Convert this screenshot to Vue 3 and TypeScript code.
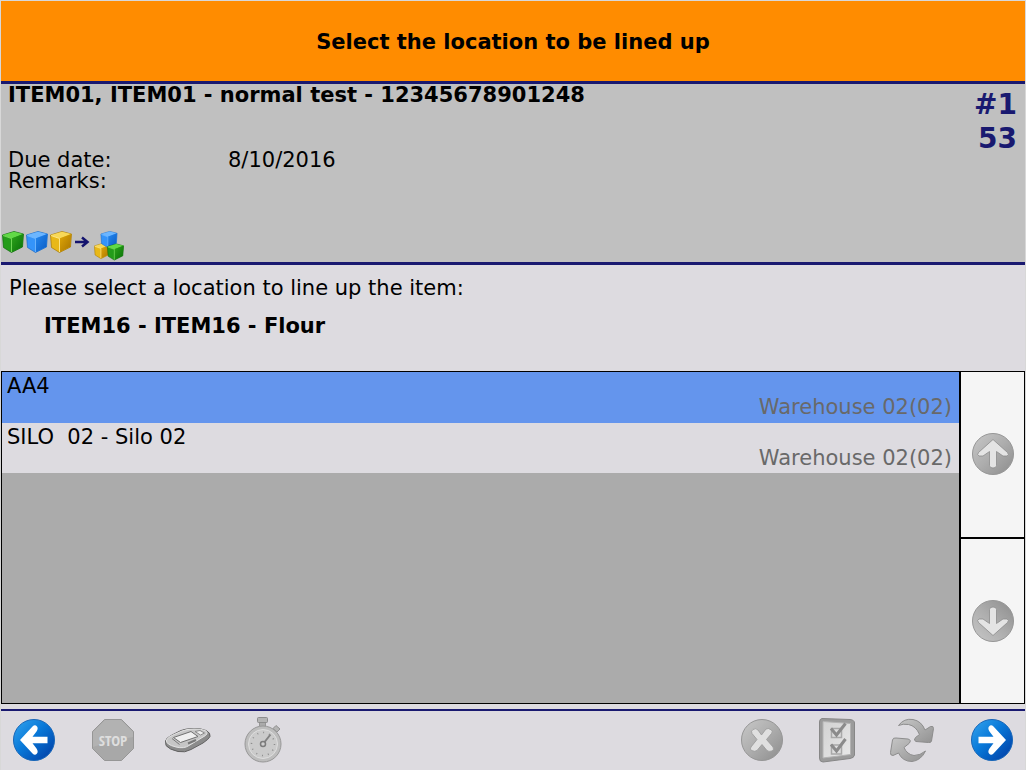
<script setup lang="ts">
import { ref } from 'vue'

interface StockLocation {
  name: string
  warehouse: string
}

const locations: StockLocation[] = [
  { name: 'AA4', warehouse: 'Warehouse 02(02)' },
  { name: 'SILO  02 - Silo 02', warehouse: 'Warehouse 02(02)' },
]

const selected = ref(0)

function move(step: number) {
  selected.value = Math.min(locations.length - 1, Math.max(0, selected.value + step))
}
</script>

<template>
  <div class="screen">
    <svg class="defs" width="0" height="0" aria-hidden="true">
      <defs>
        <linearGradient id="blue-disc" x1="0" y1="0" x2="1" y2="1">
          <stop offset="0" stop-color="#35a5ee" />
          <stop offset="0.45" stop-color="#0878d8" />
          <stop offset="1" stop-color="#0038a0" />
        </linearGradient>
        <linearGradient id="grey-disc" x1="0" y1="0" x2="1" y2="1">
          <stop offset="0" stop-color="#c8c8c8" />
          <stop offset="0.5" stop-color="#adadad" />
          <stop offset="1" stop-color="#8c8c8c" />
        </linearGradient>
        <linearGradient id="grey-fade" x1="0" y1="0" x2="1" y2="1">
          <stop offset="0" stop-color="#c6c6c6" />
          <stop offset="1" stop-color="#929292" />
        </linearGradient>
        <linearGradient id="pale-fade" x1="0" y1="0" x2="1" y2="1">
          <stop offset="0" stop-color="#d2d2d2" />
          <stop offset="1" stop-color="#e8e8e8" />
        </linearGradient>
        <linearGradient id="green-side" x1="0" y1="0" x2="1" y2="1">
          <stop offset="0" stop-color="#2fa51c" />
          <stop offset="1" stop-color="#087008" />
        </linearGradient>
        <linearGradient id="blue-side" x1="0" y1="0" x2="1" y2="1">
          <stop offset="0" stop-color="#2488f0" />
          <stop offset="1" stop-color="#0b5cc4" />
        </linearGradient>
        <linearGradient id="gold-side" x1="0" y1="0" x2="1" y2="1">
          <stop offset="0" stop-color="#e0a808" />
          <stop offset="1" stop-color="#a87400" />
        </linearGradient>
        <symbol id="cube-green" viewBox="0 0 22 22">
          <path d="M0.5 4 12 0.5 21.5 3 20.500 16 9.500 21.500 1.500 16.500Z" fill="#249c1a" stroke="#0b6a08" stroke-width="0.7" />
          <path d="M0.8 4 12 0.8 21 3 9.500 7.500Z" fill="#62d947" />
          <path d="M9.500 7.500 21.300 3 20.300 15.800 9.500 21.200Z" fill="url(#green-side)" />
          <path d="M1 4.500 9.500 7.500V21" fill="none" stroke="#7bdc5d" stroke-width="0.9" />
        </symbol>
        <symbol id="cube-blue" viewBox="0 0 22 22">
          <path d="M0.5 4 12 0.5 21.5 3 20.500 16 9.500 21.500 1.500 16.500Z" fill="#3494fa" stroke="#1468c8" stroke-width="0.7" />
          <path d="M0.8 4 12 0.8 21 3 9.500 7.500Z" fill="#6cb6ff" />
          <path d="M9.500 7.500 21.300 3 20.300 15.800 9.500 21.200Z" fill="url(#blue-side)" />
          <path d="M1 4.500 9.500 7.500V21" fill="none" stroke="#78bcff" stroke-width="0.8" />
        </symbol>
        <symbol id="cube-gold" viewBox="0 0 22 22">
          <path d="M0.5 4 12 0.5 21.5 3 20.500 16 9.500 21.500 1.500 16.500Z" fill="#e8b818" stroke="#a67800" stroke-width="0.7" />
          <path d="M0.8 4 12 0.8 21 3 9.500 7.500Z" fill="#f7d858" />
          <path d="M9.500 7.500 21.300 3 20.300 15.800 9.500 21.200Z" fill="url(#gold-side)" />
          <path d="M1 4.500 9.500 7.500V21" fill="none" stroke="#ffeb92" stroke-width="0.9" />
        </symbol>
        <symbol id="arrow-up" viewBox="0 0 42 42">
          <circle cx="21" cy="21" r="20.5" fill="url(#grey-disc)" stroke="#969696" />
          <path d="M21 6.500 35.500 19.500Q37.500 22 35 23H31L24.500 18.500V32.500Q24.500 35 21 35 17.500 35 17.500 32.500V18.500L11 23H7Q4.500 22 6.500 19.500Z" fill="#e4e4e4" stroke="#8c8c8c" stroke-width="0.8" stroke-linejoin="round" />
        </symbol>
      </defs>
    </svg>

    <header class="title-bar">
      <h1>Select the location to be lined up</h1>
    </header>

    <section class="order">
      <div class="order-info">
        <h2>ITEM01, ITEM01 - normal test - 12345678901248</h2>
        <dl>
          <dt>Due date:</dt>
          <dd>8/10/2016</dd>
          <dt>Remarks:</dt>
          <dd></dd>
        </dl>
        <svg class="flow" width="124" height="34" viewBox="0 0 124 34" role="img" aria-label="Items to assembly">
          <use href="#cube-green" x="1" y="3" width="22" height="22" />
          <use href="#cube-blue" x="25" y="3" width="22" height="22" />
          <use href="#cube-gold" x="49" y="3" width="22" height="22" />
          <path d="M74 14H86M81 9.500 86.500 14 81 18.500" fill="none" stroke="#14146e" stroke-width="2.500" />
          <use href="#cube-gold" x="93" y="15" width="16" height="16" />
          <use href="#cube-blue" x="99" y="3" width="18" height="17" />
          <use href="#cube-green" x="106" y="15" width="17" height="18" />
        </svg>
      </div>
      <p class="counter">#1<br />53</p>
    </section>

    <section class="prompt">
      <p>Please select a location to line up the item:</p>
      <strong>ITEM16 - ITEM16 - Flour</strong>
    </section>

    <main class="picker">
      <ul class="list">
        <li v-for="(loc, i) in locations" :key="loc.name">
          <button
            type="button"
            class="row"
            :class="{ active: i === selected }"
            :aria-pressed="i === selected"
            @click="selected = i"
          >
            <span class="name">{{ loc.name }}</span>
            <span class="warehouse">{{ loc.warehouse }}</span>
          </button>
        </li>
      </ul>
      <div class="pager">
        <button type="button" aria-label="Previous location" @click="move(-1)">
          <svg width="42" height="42"><use href="#arrow-up" /></svg>
        </button>
        <button type="button" aria-label="Next location" @click="move(1)">
          <svg class="flip" width="42" height="42"><use href="#arrow-up" /></svg>
        </button>
      </div>
    </main>

    <footer class="toolbar">
      <div class="group">
        <button type="button" class="back" aria-label="Back">
          <svg width="48" height="48" viewBox="0 0 48 48">
            <circle cx="24" cy="24" r="20.500" fill="url(#blue-disc)" stroke="#1766b8" />
            <path d="M10 24 22.500 10.500Q25 8 27 10.500 28.500 12.500 26.500 15.500L22.500 20.700H37.500V27.300H22.500L26.500 32.500Q28.500 35.500 27 37.500 25 40 22.500 37.500Z" fill="#fff" />
          </svg>
        </button>
        <button type="button" aria-label="Stop">
          <svg width="48" height="48" viewBox="0 0 48 48">
            <path d="M15.500 3.500H32.500L44.500 15.500V32.500L32.500 44.500H15.500L3.500 32.500V15.500Z" fill="#a8a8a8" stroke="#969696" />
            <path d="M16 4H32L44 16V21Q24 24 4 31V16Z" fill="#b2b2b2" />
            <text class="stop-label" x="24" y="30" text-anchor="middle">STOP</text>
          </svg>
        </button>
        <button type="button" aria-label="Terminal">
          <svg width="48" height="48" viewBox="0 0 48 48">
            <path d="M1.500 25Q2 22 8 19L17 14.500Q21 12.700 30 12.500 36 12 42 14.500 47 17 46 20.500 45 23 39 27L27 33.500Q21 37 14 35.500 5 33.500 2 29.500Z" fill="#8b8b8b" stroke="#626262" />
            <path d="M2.500 24Q4 21 9 19L18 15Q22 13.200 30 13 37 12.800 41 14.500 45 16.500 41.500 19.500L25 29.500Q20 33 12 31 1.500 28.500 2.500 24Z" fill="#c6c6c6" stroke="#e4e4e4" />
            <path d="M9.500 21.500 27 15.500 34 20.500 16.500 26.500Z" fill="#efefef" stroke="#707070" />
            <path d="M8 22.500 15.500 28.500" fill="none" stroke="#787878" />
            <path d="M31 15.500 36.500 19 40.500 17 36 14.500Z" fill="#eeeeee" stroke="#8c8c8c" />
            <path d="M24 27.500 32 24" fill="none" stroke="#787878" stroke-width="2" />
          </svg>
        </button>
        <button type="button" aria-label="Timer">
          <svg width="48" height="48" viewBox="0 0 48 48">
            <path d="M20.500 6H26.500V11H20.500Z" fill="#aaa" stroke="#969696" />
            <rect x="18.500" y="1.500" width="10" height="5" rx="1" fill="#b4b4b4" stroke="#8d8d8d" />
            <path d="M34 12.500 37 9.500 41 13 38 16Z" fill="#b4b4b4" stroke="#919191" />
            <circle cx="24" cy="28" r="18" fill="#bdbdbd" stroke="#989898" />
            <circle cx="24" cy="28" r="14.500" fill="#cbcbcb" stroke="#dedede" />
            <circle cx="24" cy="28" r="11.500" fill="none" stroke="#8e8e8e" stroke-width="1.500" stroke-dasharray="1 5" />
            <path d="M24 28 31.500 18.500" stroke="#828282" stroke-width="2" />
            <circle cx="24" cy="28" r="2.500" fill="#d0d0d0" stroke="#7c7c7c" stroke-width="1.500" />
          </svg>
        </button>
      </div>
      <div class="group">
        <button type="button" aria-label="Cancel">
          <svg width="48" height="48" viewBox="0 0 48 48">
            <circle cx="24" cy="24" r="20.500" fill="url(#grey-disc)" stroke="#969696" />
            <path d="M15 13.500Q18 11.500 20 14L23.500 19 28 13Q30 11.500 33.500 14 35 15.500 33.500 17.500L28.500 23.500 35 31Q36.500 33.500 34 35 30.500 36 29 34.500L24 28.500 19 34.500Q17 36 13.500 34.500 11.500 33 13 31L19 23.500 14 17.500Q12.500 15 15 13.500Z" fill="#e0e0e0" stroke="#989898" stroke-width="0.800" />
          </svg>
        </button>
        <button type="button" aria-label="Checklist">
          <svg width="48" height="48" viewBox="0 0 48 48">
            <path d="M9 2.500 37 3.500Q41.500 4 41.500 7V39Q41 42 37 42.500L10 46Q6.500 46 6.500 42V6Q6.500 3 9 2.500Z" fill="#9b9b9b" stroke="#878787" />
            <path d="M10 5.500 37.500 7.500V38.500L10 42Z" fill="url(#pale-fade)" stroke="#b3b3b3" />
            <path d="M18.500 12.500H28.500V21.500H18.500ZM18.500 29H28.500V38H18.500Z" fill="#dedede" stroke="#a8a8a8" stroke-width="1.500" />
            <path d="M18 12.500 23.500 19 32.500 7.500M18 28.500 23.500 35 32.500 23" fill="none" stroke="#8b8b8b" stroke-width="3" />
          </svg>
        </button>
        <button type="button" aria-label="Refresh">
          <svg width="48" height="48" viewBox="0 0 48 48">
            <g fill="url(#grey-fade)" stroke="#8d8d8d">
              <path d="M10.500 9.500Q16 2 25 3.500 33.500 5 37 14L42.500 10.500Q45.500 9.500 45.500 12.500L43.500 25Q43 27 40.500 26.500L28 25.500Q25 24.500 27.500 21.500L31.500 18.500Q28 10 20.500 8.500 15 7.500 10.500 9.500Z" />
              <path d="M37.500 35Q33 44.500 24 45.500 14.500 45.500 10.500 37L5 39.500Q2 39.500 2.500 36.500L4.500 24Q5 21.500 8 22L20 23Q24 24 21 27.500L16 31.500Q19 38.500 26 39.500 32 39.500 37.500 35Z" />
            </g>
          </svg>
        </button>
        <button type="button" class="next" aria-label="Continue">
          <svg width="48" height="48" viewBox="0 0 48 48">
            <circle cx="24" cy="24" r="20.500" fill="url(#blue-disc)" stroke="#1766b8" />
            <path d="M38 24 25.500 10.500Q23 8 21 10.500 19.500 12.500 21.500 15.500L25.500 20.700H10.500V27.300H25.500L21.500 32.500Q19.500 35.500 21 37.500 23 40 25.500 37.500Z" fill="#fff" />
          </svg>
        </button>
      </div>
    </footer>
  </div>
</template>

<style>
body {
  margin: 0;
  background: #dddbe0;
}
</style>

<style scoped>
.screen {
  box-sizing: border-box;
  min-height: 100vh;
  display: flex;
  flex-direction: column;
  border: 1px solid #d8d8d8;
  border-bottom: 0;
  background: #dddbe0;
  color: #000;
  font-family: Verdana, "DejaVu Sans", sans-serif;
  font-size: 21px;
  line-height: 21px;
}
.defs {
  position: absolute;
}
h1,
h2,
p,
dl,
dd,
ul {
  margin: 0;
  padding: 0;
}
h1,
h2 {
  font-size: 21px;
}
button {
  padding: 0;
  border: 0;
  background: none;
  color: inherit;
  font: inherit;
  cursor: pointer;
}
svg {
  display: block;
}
.title-bar {
  height: 78px;
  padding-top: 2px;
  display: flex;
  align-items: center;
  justify-content: center;
  background: #ff8c00;
  border-bottom: 3px solid #191970;
}
.order {
  height: 178px;
  display: flex;
  justify-content: space-between;
  background: #c0c0c0;
  border-bottom: 3px solid #191970;
}
.order-info {
  display: flex;
  flex-direction: column;
}
.order-info h2 {
  padding: 1px 0 0 7px;
}
dl {
  display: grid;
  grid-template-columns: 220px auto;
  padding: 44px 0 0 7px;
}
.flow {
  margin-top: auto;
}
.counter {
  padding: 4px 8px 0 0;
  color: #191970;
  font-size: 28px;
  font-weight: bold;
  line-height: 34px;
  text-align: right;
}
.prompt {
  height: 93px;
  padding: 13px 8px 0;
}
.prompt strong {
  display: block;
  padding: 17px 0 0 35px;
}
.picker {
  flex: 1;
  display: flex;
  min-height: 200px;
  border: 1px solid #000;
}
.list {
  flex: 1;
  background: #ababab;
  list-style: none;
}
.row {
  width: 100%;
  height: 50px;
  display: flex;
  flex-direction: column;
  padding: 4px 7px 0 5px;
  background: #dddbe0;
  text-align: left;
}
.row.active {
  height: 51px;
  background: #6495ed;
}
.name {
  white-space: pre;
}
.warehouse {
  align-self: flex-end;
  color: #696969;
}
.pager {
  width: 63px;
  display: grid;
  grid-template-rows: 1fr 1fr;
  gap: 2px;
  background: #000;
  border-left: 2px solid #000;
}
.pager button {
  display: flex;
  align-items: center;
  justify-content: center;
  background: #f5f5f5;
}
.flip {
  transform: scaleY(-1);
}
.toolbar {
  height: 57px;
  margin-top: 5px;
  padding: 0 9px 2px;
  display: flex;
  align-items: center;
  justify-content: space-between;
  border-top: 2px solid #191970;
}
.group {
  display: flex;
  gap: 27px;
}
.back {
  margin-right: 4px;
}
.next {
  margin-left: 5px;
}
.stop-label {
  font: bold 15px "Liberation Sans Narrow", "Open Sans Condensed", "DejaVu Sans Condensed", sans-serif;
  fill: #dedede;
}
</style>
